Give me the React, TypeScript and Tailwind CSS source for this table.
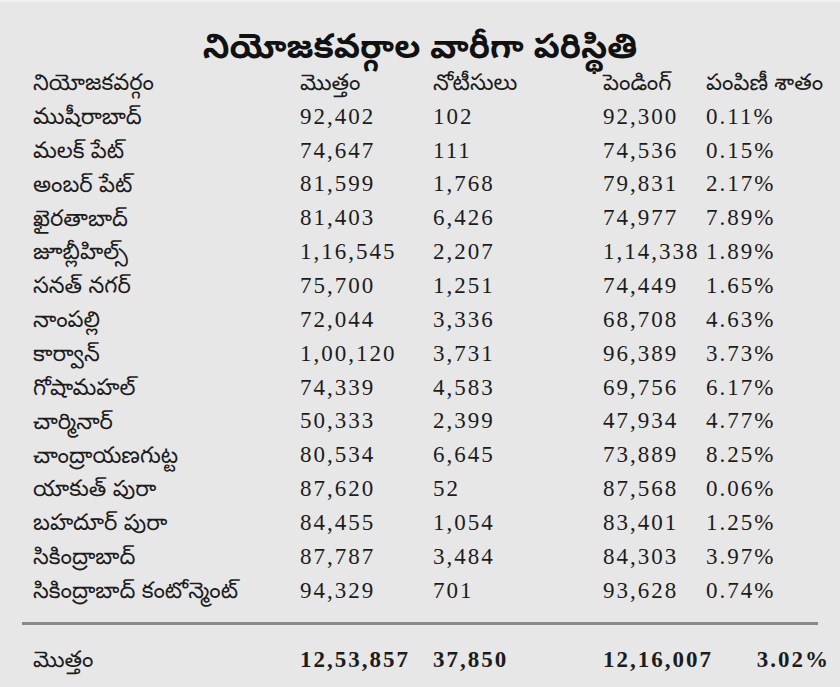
import React from 'react';

type Row = { name: string; total: string; notices: string; pending: string; pct: string };

const ROWS: Row[] = [
  { name: 'ముషీరాబాద్', total: '92,402', notices: '102', pending: '92,300', pct: '0.11%' },
  { name: 'మలక్ పేట్', total: '74,647', notices: '111', pending: '74,536', pct: '0.15%' },
  { name: 'అంబర్ పేట్', total: '81,599', notices: '1,768', pending: '79,831', pct: '2.17%' },
  { name: 'ఖైరతాబాద్', total: '81,403', notices: '6,426', pending: '74,977', pct: '7.89%' },
  { name: 'జూబ్లీహిల్స్', total: '1,16,545', notices: '2,207', pending: '1,14,338', pct: '1.89%' },
  { name: 'సనత్ నగర్', total: '75,700', notices: '1,251', pending: '74,449', pct: '1.65%' },
  { name: 'నాంపల్లి', total: '72,044', notices: '3,336', pending: '68,708', pct: '4.63%' },
  { name: 'కార్వాన్', total: '1,00,120', notices: '3,731', pending: '96,389', pct: '3.73%' },
  { name: 'గోషామహల్', total: '74,339', notices: '4,583', pending: '69,756', pct: '6.17%' },
  { name: 'చార్మినార్', total: '50,333', notices: '2,399', pending: '47,934', pct: '4.77%' },
  { name: 'చాంద్రాయణగుట్ట', total: '80,534', notices: '6,645', pending: '73,889', pct: '8.25%' },
  { name: 'యాకుత్ పురా', total: '87,620', notices: '52', pending: '87,568', pct: '0.06%' },
  { name: 'బహదూర్ పురా', total: '84,455', notices: '1,054', pending: '83,401', pct: '1.25%' },
  { name: 'సికింద్రాబాద్', total: '87,787', notices: '3,484', pending: '84,303', pct: '3.97%' },
  { name: 'సికింద్రాబాద్ కంటోన్మెంట్', total: '94,329', notices: '701', pending: '93,628', pct: '0.74%' },
];

const TE = "font-['Noto_Sans_Telugu','Noto_Serif_Telugu','Noto_Sans',sans-serif]";
const TE_CELL = `${TE} text-[22.5px] leading-[30px] pt-[6px] whitespace-nowrap`;
const NUM = "font-['Liberation_Serif',serif] text-[23px] tracking-[2px] whitespace-nowrap";
const COLS = 'grid grid-cols-[267px_133px_170px_103px_1fr] items-center pl-[33px]';

export default function App() {
  return (
    <div className="w-[840px] h-[687px] bg-[#e7e7e7] text-[#1c1c1c] border-t-2 border-[#f0f0f0] overflow-hidden">
      {/* Title */}
      <h1 className={`${TE} h-[63px] flex items-center justify-center text-[34px] leading-[40px] font-bold text-[#111] pt-[34px]`}>
        నియోజకవర్గాల వారీగా పరిస్థితి
      </h1>

      {/* Header */}
      <div className={`${COLS} h-[34px]`}>
        <span className={TE_CELL}>నియోజకవర్గం</span>
        <span className={TE_CELL}>మొత్తం</span>
        <span className={TE_CELL}>నోటీసులు</span>
        <span className={TE_CELL}>పెండింగ్</span>
        <span className={TE_CELL}>పంపిణీ శాతం</span>
      </div>

      {/* Rows */}
      {ROWS.map((r) => (
        <div key={r.name} className={`${COLS} h-[33.86px]`}>
          <span className={TE_CELL}>{r.name}</span>
          <span className={NUM}>{r.total}</span>
          <span className={NUM}>{r.notices}</span>
          <span className={NUM}>{r.pending}</span>
          <span className={NUM}>{r.pct}</span>
        </div>
      ))}

      <div className="mx-[22px] mt-[15px] h-[3px] bg-[#8a8a8a]" />

      {/* Total */}
      <div className={`${COLS} h-[34px] mt-[17px]`}>
        <span className={TE_CELL}>మొత్తం</span>
        <span className={`${NUM} font-bold`}>12,53,857</span>
        <span className={`${NUM} font-bold`}>37,850</span>
        <span className={`${NUM} font-bold`}>12,16,007</span>
        <span className={`${NUM} font-bold text-right pr-[10px]`}>3.02%</span>
      </div>
    </div>
  );
}
